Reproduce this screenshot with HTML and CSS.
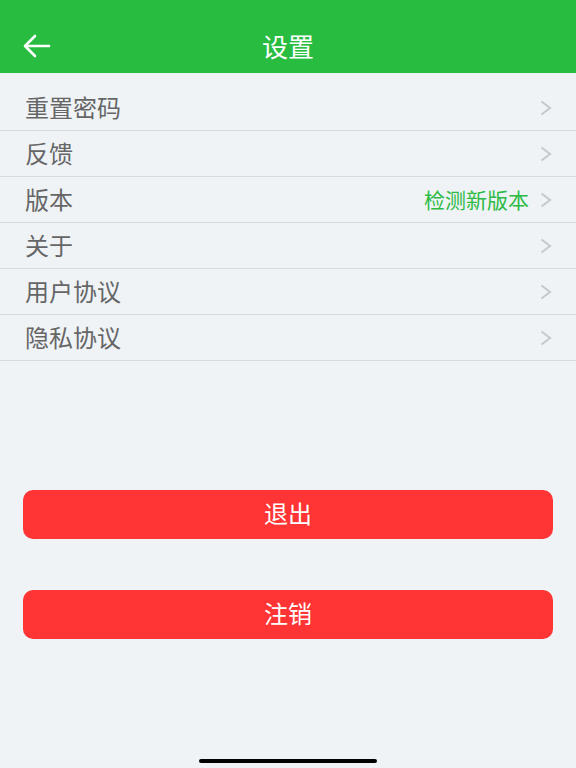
FILE: index.html
```html
<!DOCTYPE html>
<html lang="zh-CN">
<head>
<meta charset="utf-8">
<title>设置</title>
<link rel="stylesheet" href="styles.css">
</head>
<body>
<div class="screen">
  <header class="header">
    <div class="back">
      <svg width="28" height="24" viewBox="0 0 28 24" fill="none" stroke="#fff" stroke-width="2.6" stroke-linecap="round" stroke-linejoin="round">
        <path d="M26 12H3"/>
        <path d="M12 2L2 12l10 10"/>
      </svg>
    </div>
    <h1 class="title">设置</h1>
    <div class="spacer"></div>
  </header>
  <ul class="list">
    <li class="row"><span class="label">重置密码</span><svg class="chev" width="12" height="16" viewBox="0 0 12 16"><path d="M1.5 1.5L10 8l-8.5 6.5" fill="none" stroke="#c6c8ca" stroke-width="2"/></svg></li>
    <li class="row"><span class="label">反馈</span><svg class="chev" width="12" height="16" viewBox="0 0 12 16"><path d="M1.5 1.5L10 8l-8.5 6.5" fill="none" stroke="#c6c8ca" stroke-width="2"/></svg></li>
    <li class="row"><span class="label">版本</span><span class="extra">检测新版本</span><svg class="chev" width="12" height="16" viewBox="0 0 12 16"><path d="M1.5 1.5L10 8l-8.5 6.5" fill="none" stroke="#c6c8ca" stroke-width="2"/></svg></li>
    <li class="row"><span class="label">关于</span><svg class="chev" width="12" height="16" viewBox="0 0 12 16"><path d="M1.5 1.5L10 8l-8.5 6.5" fill="none" stroke="#c6c8ca" stroke-width="2"/></svg></li>
    <li class="row"><span class="label">用户协议</span><svg class="chev" width="12" height="16" viewBox="0 0 12 16"><path d="M1.5 1.5L10 8l-8.5 6.5" fill="none" stroke="#c6c8ca" stroke-width="2"/></svg></li>
    <li class="row"><span class="label">隐私协议</span><svg class="chev" width="12" height="16" viewBox="0 0 12 16"><path d="M1.5 1.5L10 8l-8.5 6.5" fill="none" stroke="#c6c8ca" stroke-width="2"/></svg></li>
  </ul>
  <div class="actions">
    <button class="btn">退出</button>
    <button class="btn">注销</button>
  </div>
  <div class="home-indicator"></div>
</div>
</body>
</html>
```

FILE: styles.css
```css
* { box-sizing: border-box; }
html, body {
  margin: 0;
  padding: 0;
  background: #eff3f6;
  font-family: "Noto Sans CJK SC", "Noto Sans", sans-serif;
}
.screen {
  position: relative;
  width: 576px;
  height: 768px;
  background: #eff3f6;
  overflow: hidden;
}
.header {
  height: 73px;
  background: #28bd41;
  display: grid;
  grid-template-columns: 1fr auto 1fr;
  align-items: center;
  padding-top: 18px;
}
.back {
  padding-left: 23px;
  display: flex;
  align-items: center;
}
.back svg { display: block; }
.title {
  margin: 0;
  font-size: 26px;
  font-weight: 400;
  color: #fff;
  line-height: 1;
  padding-top: 1px;
}
.list {
  list-style: none;
  margin: 12px 0 0;
  padding: 0;
}
.row {
  height: 46px;
  border-bottom: 1px solid #d8dadc;
  display: flex;
  align-items: center;
  padding: 0 24px 0 25px;
}
.label {
  flex: 1;
  font-size: 24px;
  color: #666;
  line-height: 1;
  padding-bottom: 2px;
}
.extra {
  font-size: 21px;
  color: #2dbb46;
  line-height: 1;
  margin-right: 11px;
  padding-bottom: 1px;
}
.chev {
  display: block;
}
.actions {
  display: flex;
  flex-direction: column;
  gap: 51px;
  padding: 129px 23px 0;
}
.btn {
  height: 49px;
  border: none;
  border-radius: 10px;
  background: #ff3434;
  color: #fff;
  font-family: "Noto Sans CJK SC", "Noto Sans", sans-serif;
  font-size: 24px;
  line-height: 1;
  padding: 0 0 3px;
}
.home-indicator {
  position: absolute;
  left: 199px;
  bottom: 5px;
  width: 178px;
  height: 4px;
  border-radius: 2px;
  background: #000;
}
```
